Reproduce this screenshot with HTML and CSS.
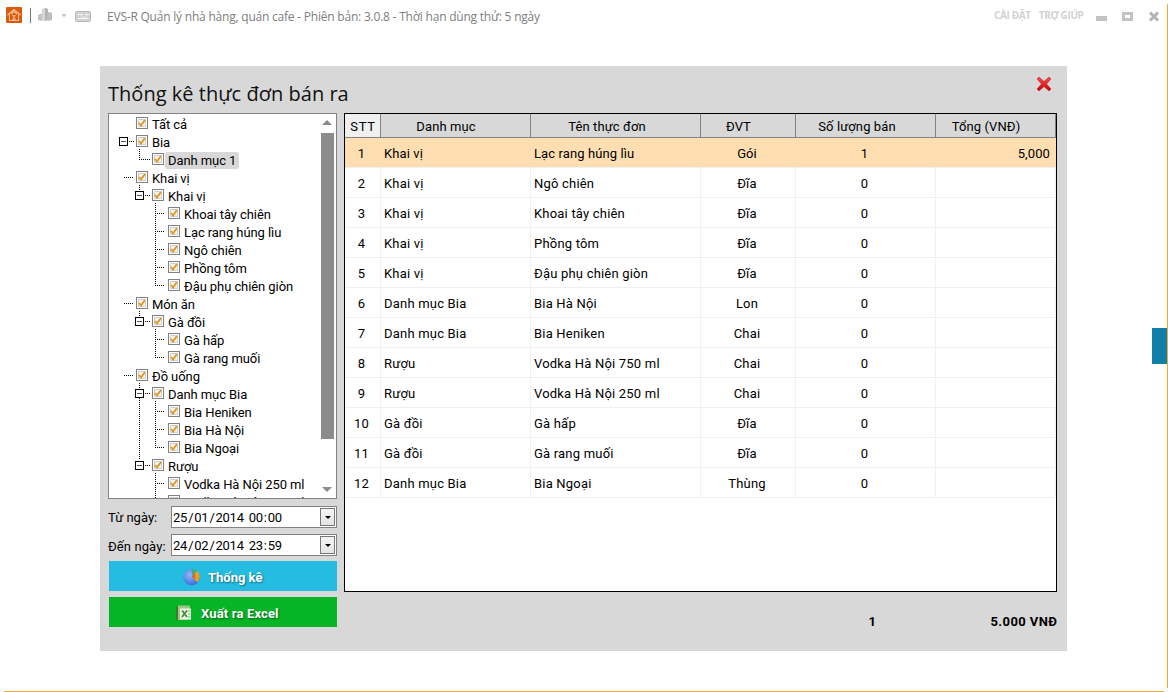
FILE: index.html
```html
<!DOCTYPE html>
<html lang="vi">
<head>
<meta charset="utf-8">
<title>EVS-R</title>
<link rel="stylesheet" href="styles.css">
</head>
<body>
<div class="window">
  <header class="titlebar">
    <svg class="tools" width="100" height="32" viewBox="0 0 100 32">
      <rect x="6" y="7" width="16" height="16" rx="1" fill="#dc5a0a"/>
      <path d="M7.500 15L14 9.500l6.500 5.500M9.500 14.500v6h9v-6M11 14l3-2.500 3 2.500" fill="none" stroke="#f9c39a" stroke-width="1.100"/>
      <path d="M12.500 15.500h3l-3 4h3M12.500 15.500l3 4" fill="none" stroke="#ffc9a0" stroke-width=".8"/>
      <path d="M30.500 8v15" stroke="#777"/>
      <path d="M38 15l3-1.500 3 1.500v5l-3 1-3-1z" fill="#c4c4c4"/>
      <path d="M42 9l3-1 3 1v11l-3 1-3-1z" fill="#d6d6d6"/>
      <path d="M45 8l3 1v11l-3 1z" fill="#b2b2b2"/>
      <path d="M47 13l2.500-1 2.500 1v7l-2.500 1-2.500-1z" fill="#bdbdbd"/>
      <path d="M61 14h6l-3 3.500z" fill="#ccc"/>
      <rect x="75.500" y="11.500" width="15" height="10" rx="1" fill="#d2d2d2" stroke="#bababa"/>
      <path d="M78 14.500h5M85 14.500h4M78 18.500h10M82 16.500l2 2 3-3" fill="none" stroke="#f4f4f4"/>
    </svg>
    <span class="caption">EVS-R Quản lý nhà hàng, quán cafe - Phiên bản: 3.0.8 - Thời hạn dùng thử: 5 ngày</span>
    <nav class="menu"><span>CÀI ĐẶT</span><span>TRỢ GIÚP</span></nav>
    <svg class="controls" width="72" height="32" viewBox="0 0 72 32" shape-rendering="crispEdges">
      <rect x="0" y="16" width="11" height="5" fill="#c3c3c3"/>
      <path d="M26 12h11v9H26zM29 15v3h5v-3z" fill="#c3c3c3" fill-rule="evenodd"/>
      <path d="M54 12.500l8 8M62 12.500l-8 8" stroke="#b3b3b3" stroke-width="3" shape-rendering="auto"/>
    </svg>
  </header>
  <main class="dialog">
    <div class="head">
      <h1>Thống kê thực đơn bán ra</h1>
      <svg class="close" width="16" height="16" viewBox="0 0 16 16">
        <defs><linearGradient id="red" x1="0" y1="0" x2="0" y2="1"><stop offset="0" stop-color="#f45050"/><stop offset="1" stop-color="#c40000"/></linearGradient></defs>
        <path d="M3 1L8 5.500 13 1l2 2-4.500 5 4.500 5-2 2-5-4.500L3 15l-2-2 4.500-5L1 3z" fill="url(#red)" stroke="#d01a1a" stroke-width=".6"/>
      </svg>
    </div>
    <div class="content">
      <aside class="side">
        <div class="tree" id="tree">
          <svg class="lines" width="228" height="384" viewBox="109 114 228 384" shape-rendering="crispEdges">
            <g fill="none" stroke="#000" stroke-dasharray="1 1">
              <path d="M129 141.500h6M139.500 149v10M139 159.500h11"/>
              <path d="M124 177.500h10M139.500 185v6M145 195.500h5M155.500 203v82M155 213.500h10M155 231.500h10M155 249.500h10M155 267.500h10M155 285.500h10"/>
              <path d="M124 303.500h10M139.500 311v6M145 321.500h5M155.500 329v28M155 339.500h10M155 357.500h10"/>
              <path d="M124 375.500h10M139.500 383v6M139.500 398v62M145 393.500h5M145 465.500h5M155.500 401v46M155 411.500h10M155 429.500h10M155 447.500h10M155.500 473v25M155 483.500h10"/>
            </g>
            <g fill="#fff" stroke="#000">
              <path d="M119.500 137.500h8v8h-8zM135.500 191.500h8v8h-8zM135.500 317.500h8v8h-8zM135.500 389.500h8v8h-8zM135.500 461.500h8v8h-8z"/>
              <path d="M121 141.500h5M137 195.500h5M137 321.500h5M137 393.500h5M137 465.500h5" stroke="#555"/>
            </g>
          </svg>
          <div class="scroll"><i class="up"></i><i class="thumb"></i><i class="down"></i></div>
        </div>
        <div class="field"><label>Từ ngày:</label><div class="date"><span>25<s>/</s>01<s>/</s>2014</span><span class="time">00<s>:</s>00</span><i class="drop"></i></div></div>
        <div class="field second"><label>Đến ngày:</label><div class="date"><span>24<s>/</s>02<s>/</s>2014</span><span class="time">23<s>:</s>59</span><i class="drop"></i></div></div>
        <button class="btn blue">
          <svg width="18" height="18" viewBox="0 0 18 18"><defs><radialGradient id="pie" cx=".4" cy=".35" r=".7"><stop offset="0" stop-color="#8fb8ff"/><stop offset="1" stop-color="#3568d8"/></radialGradient></defs><circle cx="8.500" cy="9.300" r="8.200" fill="url(#pie)"/><path d="M9 8V.700a8 8 0 0 1 4.800 2.200z" fill="#3fae7a"/><path d="M9 8.300l5.300-5.500a8 8 0 0 1 0 11.500z" fill="#e8a020"/><path d="M9 8.300l3-3v6z" fill="#e2552a"/></svg>
          <span>Thống kê</span>
        </button>
        <button class="btn green">
          <svg width="16" height="16" viewBox="0 0 16 16"><path d="M0 2l3-1.500V14.500l-3 1z" fill="#3d7a2c"/><path d="M2 .500h12V13l-2 2H2z" fill="#9cc584"/><path d="M4 3.500h11v11H4z" fill="#e9f3e2"/><path d="M6 5.500l5 6.500M11 5.500l-5 6.500" stroke="#3f8a34" stroke-width="1.700"/><path d="M12 6h2.500M12 9h2.500M12 12h2.500" stroke="#88b37a"/></svg>
          <span>Xuất ra Excel</span>
        </button>
      </aside>
      <section class="right">
        <div class="grid" id="grid">
          <div class="row header"><div>STT</div><div>Danh mục</div><div>Tên thực đơn</div><div>ĐVT</div><div>Số lượng bán</div><div>Tổng (VNĐ)</div></div>
        </div>
        <div class="totals"><span class="count">1</span><span class="sum">5.000 VNĐ</span></div>
      </section>
    </div>
  </main>
  <div class="tab"></div>
  <div class="edge-right"></div>
  <div class="edge-bottom"></div>
</div>
<script src="app.js"></script>
</body>
</html>
```
FILE: styles.css
```css
* { box-sizing: border-box; }
body { margin: 0; background: #fff; font: 13px Roboto, sans-serif; color: #000; }
.window { position: relative; width: 1168px; height: 692px; overflow: hidden; }
.titlebar { display: flex; height: 66px; align-items: flex-start; }
.tools { flex: none; }
.caption { flex: none; margin-left: 7px; width: 880px; font: 12px/34px "Open Sans", sans-serif; letter-spacing: -.215px; color: #808080; white-space: nowrap; }
.menu { flex: none; width: 109px; display: flex; gap: 8px; font: bold 10px/31px "Open Sans", sans-serif; letter-spacing: -.36px; color: #d2d2d2; white-space: nowrap; margin-left: 7px; }
.controls { flex: none; margin-left: -7px; }
.dialog { margin-left: 100px; width: 967px; height: 585px; padding: 0 10px 0 8px; background: #d8d8d8; }
.head { display: flex; justify-content: space-between; height: 47px; }
h1 { margin: 0; font: 20px/55px "Open Sans", sans-serif; letter-spacing: .03px; color: #111; white-space: nowrap; }
.close { margin: 10px 5px 0 0; }
.content { display: flex; gap: 7px; }
.side { width: 229px; flex: none; }
.tree { position: relative; height: 386px; border: 1px solid #828282; background: #fff; overflow: hidden; padding-top: 1px; letter-spacing: -.08px; }
.lines { position: absolute; left: 0; top: 0; }
.node { position: relative; display: flex; align-items: center; height: 18px; white-space: nowrap; }
.l0 { padding-left: 27px; }
.l1 { padding-left: 43px; }
.l2 { padding-left: 59px; }
.node svg { flex: none; margin: -2px 2px 0 0; }
.node span { height: 17px; line-height: 18px; padding: 0 2px; border-radius: 2px; }
.node .selected { background: #d8d8d8; padding-right: 3px; margin: 0 0 0 -1px; padding-left: 3px; }
.scroll { position: absolute; right: 2px; top: 0; width: 13px; height: 384px; }
.up, .down { position: absolute; left: 1px; border: 5px solid transparent; }
.up { top: 1px; border-bottom-color: #8b8b8b; }
.down { bottom: 1px; border-top-color: #8b8b8b; }
.thumb { position: absolute; top: 19px; left: 0; width: 13px; height: 306px; background: #8b8b8b; }
.field { display: flex; margin-top: 7px; height: 22px; }
.field.second { margin-top: 6px; }
label { width: 63px; line-height: 23px; white-space: nowrap; }
.second label { line-height: 25px; letter-spacing: .1px; }
.date { flex: 1; display: flex; border: 1px solid #828282; background: #fff; line-height: 21px; padding-left: 1px; letter-spacing: -.25px; }
.date s { text-decoration: none; padding: 0 1px; }
.time { margin-left: 5px; }
.drop { width: 15px; height: 18px; margin: 1px 1px 0 auto; border: 1px solid #777; background: linear-gradient(#f4f4f4, #e4e4e4); display: grid; place-items: center; }
.drop::after { content: ""; border: 3px solid transparent; border-top-color: #000; border-bottom: 0; }
.btn { display: flex; align-items: center; width: 228px; height: 30px; margin: 5px 0 0 1px; border: 0; padding: 2px 0 0; color: #fff; font: bold 13px Roboto, sans-serif; text-shadow: 1px 1px 2px rgba(0,0,0,.45); }
.blue { background: #25bce2; padding-left: 74px; gap: 7px; }
.green { background: #06b526; margin-top: 6px; padding-left: 67px; gap: 9px; letter-spacing: .15px; }
.grid { width: 713px; height: 479px; border: 1px solid #000; background: #fff; }
.row { display: grid; grid-template-columns: 36px 150px 170px 95px 140px 120px; grid-template-rows: 100%; height: 30px; line-height: 32px; letter-spacing: .2px; }
.row > div { border-right: 1px solid #f0f0f0; border-bottom: 1px solid #f0f0f0; padding-left: 3px; white-space: nowrap; }
.row > div:first-child { text-align: center; padding: 0 2px 0 0; }
.row > div:nth-child(4), .row > div:nth-child(5) { text-align: center; padding: 0 2px 0 0; }
.row > div:nth-child(6) { text-align: right; padding-right: 5px; }
.row.active > div { background: #ffdfb2; border-right-color: #ffdfb2; letter-spacing: .1px; }
.row.header { height: 24px; line-height: 25px; background: #d8d8d8; letter-spacing: .1px; }
.row.header > div { border-color: #828282; text-align: center; padding: 0 19px 0 0; }
.row.header > div:nth-child(3), .row.header > div:nth-child(5) { padding-right: 17px; }
.row.header > div:first-child { background: #f0f0f0; padding: 0 0 0 1px; letter-spacing: .8px; }
.totals { display: flex; justify-content: flex-end; width: 713px; height: 58px; line-height: 59px; font-weight: bold; }
.count { width: 10px; margin-right: 112px; }
.sum { letter-spacing: .42px; margin-right: -.42px; }
.tab { position: absolute; left: 1152px; top: 328px; width: 16px; height: 36px; background: #117fa8; }
.edge-right { position: absolute; left: 1167px; top: 4px; width: 1px; height: 684px; background: #f3a73a; }
.edge-bottom { position: absolute; left: 4px; top: 691px; width: 1160px; height: 1px; background: #f3a73a; }
```
FILE: app.js
```js
const nodes = [
  [0, "Tất cả"], [0, "Bia"], [1, "Danh mục 1"], [0, "Khai vị"], [1, "Khai vị"],
  [2, "Khoai tây chiên"], [2, "Lạc rang húng lìu"], [2, "Ngô chiên"], [2, "Phồng tôm"],
  [2, "Đậu phụ chiên giòn"], [0, "Món ăn"], [1, "Gà đồi"], [2, "Gà hấp"],
  [2, "Gà rang muối"], [0, "Đồ uống"], [1, "Danh mục Bia"], [2, "Bia Heniken"],
  [2, "Bia Hà Nội"], [2, "Bia Ngoại"], [1, "Rượu"], [2, "Vodka Hà Nội 250 ml"],
  [2, "Vodka Hà Nội 750 ml"]
];
const box = '<svg width="12" height="12" viewBox="0 0 12 12"><rect x=".5" y=".5" width="11" height="11" fill="#fff" stroke="#828282"/><rect x="2.5" y="2.5" width="7" height="7" fill="#f6f6f6" stroke="#d0d0d0"/><path d="M3 6l2 2.500L9 3" fill="none" stroke="#e8941a" stroke-width="1.900"/></svg>';
document.getElementById("tree").insertAdjacentHTML("beforeend", nodes.map(([level, text]) =>
  `<div class="node l${level}">${box}<span${text === "Danh mục 1" ? ' class="selected"' : ""}>${text}</span></div>`).join(""));

const rows = [
  ["Khai vị", "Lạc rang húng lìu", "Gói", "1", "5,000"], ["Khai vị", "Ngô chiên", "Đĩa"],
  ["Khai vị", "Khoai tây chiên", "Đĩa"], ["Khai vị", "Phồng tôm", "Đĩa"],
  ["Khai vị", "Đậu phụ chiên giòn", "Đĩa"], ["Danh mục Bia", "Bia Hà Nội", "Lon"],
  ["Danh mục Bia", "Bia Heniken", "Chai"], ["Rượu", "Vodka Hà Nội 750 ml", "Chai"],
  ["Rượu", "Vodka Hà Nội 250 ml", "Chai"], ["Gà đồi", "Gà hấp", "Đĩa"],
  ["Gà đồi", "Gà rang muối", "Đĩa"], ["Danh mục Bia", "Bia Ngoại", "Thùng"]
];
document.getElementById("grid").insertAdjacentHTML("beforeend", rows.map(([cat, name, unit, qty = "0", sum = ""], i) =>
  `<div class="row${i ? "" : " active"}">${[i + 1, cat, name, unit, qty, sum].map(v => `<div>${v}</div>`).join("")}</div>`).join(""));
```
